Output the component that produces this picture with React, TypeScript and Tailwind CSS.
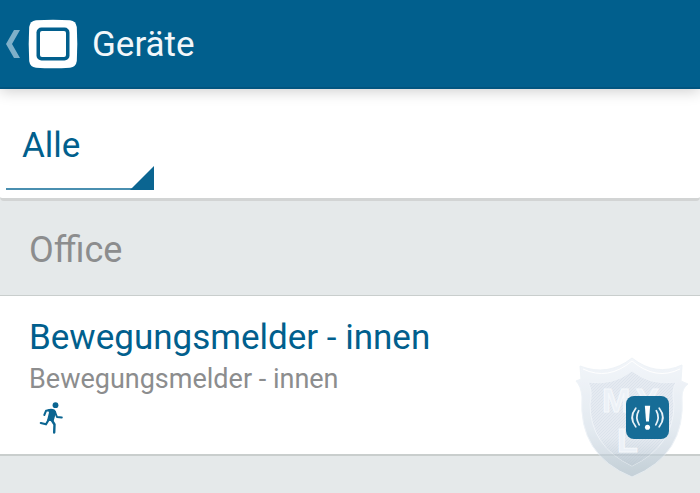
import { useId } from "react";

function AppLogo() {
  return (
    <svg viewBox="0 0 50 50" className="h-[50px] w-[50px]" aria-hidden="true">
      <path
        d="M8 1.200Q25 .2 42 1.200Q48 2 48.800 8Q49.800 25 48.800 42Q48 48 42 48.800Q25 49.800 8 48.800Q2 48 1.200 42Q.2 25 1.200 8Q2 2 8 1.2Z"
        fill="#fff"
      />
      <rect x="8.500" y="8.500" width="33" height="33" rx="5" fill="#015f8d" />
      <rect x="12" y="12" width="26" height="26" rx="2" fill="#fff" />
    </svg>
  );
}

function Runner() {
  return (
    <svg
      viewBox="0 0 26 34"
      className="h-[34px] w-[26px]"
      fill="none"
      stroke="#0b6591"
      strokeLinecap="round"
      strokeLinejoin="round"
      role="img"
      aria-label="Bewegung"
    >
      <circle cx="16.500" cy="4.200" r="2.900" fill="#0b6591" stroke="none" />
      <path d="M8.500 8.500Q12 7 15.500 8.500L17.200 11L14.500 20.500L8 19.500L10 11.500Z" fill="#0b6591" stroke="none" />
      <path d="M11.500 9L7 9.800L5.300 14" strokeWidth="2" />
      <path d="M15.800 10.500L18 16L22.800 16.500" strokeWidth="2" />
      <path d="M9.500 19L7 23.300L1.800 22" strokeWidth="2.200" />
      <path d="M13 19.500L15.500 23.500L15.200 31.500" strokeWidth="2.400" />
    </svg>
  );
}

function AlertIcon() {
  return (
    <svg viewBox="0 0 44 44" className="h-[43px] w-[43px]" fill="none" stroke="#e9f2f8" strokeWidth="1.800" strokeLinecap="round" aria-hidden="true">
      <path d="M19.300 10H24.700L23.500 26H20.500Z" fill="#fff" stroke="none" />
      <circle cx="22" cy="32" r="2.600" fill="#fff" stroke="none" />
      <path d="M13 15Q9 22 13.500 29.500M10 12.500Q2.500 22 10 31.500" />
      <path d="M31 15Q35 22 30.500 29.500M34 12.500Q41.500 22 34 31.500" />
    </svg>
  );
}

function Shield() {
  const id = useId();
  return (
    <svg viewBox="0 0 114 122" className="h-[122px] w-[114px]" opacity="0.65" aria-hidden="true">
      <defs>
        <linearGradient id={`${id}rim`} x1="0" y1="0" x2="0" y2="1">
          <stop offset="0" stopColor="#edf2f8" />
          <stop offset="0.600" stopColor="#d5dfe9" />
          <stop offset="1" stopColor="#b3c3ce" />
        </linearGradient>
        <linearGradient id={`${id}shade`} x1="0" y1="0" x2="0" y2="1">
          <stop offset="0.700" stopColor="#9fb2c0" stopOpacity="0" />
          <stop offset="1" stopColor="#9fb2c0" stopOpacity="0.700" />
        </linearGradient>
        <pattern id={`${id}mesh`} width="3" height="3" patternUnits="userSpaceOnUse">
          <rect width="3" height="3" fill="#d8e0ea" />
          <path d="M0 3L3 0" stroke="#c4d0df" strokeWidth="0.700" />
        </pattern>
      </defs>
      <path
        d="M5 9Q33 20 57 1Q81 20 107 8L106 24L113 27Q107 31 107 40Q111 98 57 120Q3 98 7 40Q6 29 1 24L6 22Z"
        fill={`url(#${id}rim)`}
        stroke="#e6edf4"
      />
      <path
        d="M13 25Q38 29 57 14Q76 29 101 25Q96 34 99 47Q99 89 57 109Q15 89 15 47Q18 34 13 25Z"
        fill={`url(#${id}mesh)`}
        stroke="#e9eff6"
      />
      <path
        d="M13 25Q38 29 57 14Q76 29 101 25Q96 34 99 47Q99 89 57 109Q15 89 15 47Q18 34 13 25Z"
        fill={`url(#${id}shade)`}
      />
      <path d="M8 12Q33 24 57 4Q81 24 105 12" fill="none" stroke="#fff" />
      <g fill="#e3eaf3" stroke="#f1f5fa" fontFamily="'Liberation Sans', sans-serif" fontWeight="700" fontSize="34">
        <text x="27" y="55">M</text>
        <text x="61" y="55">Y</text>
        <text x="42" y="95">L</text>
      </g>
    </svg>
  );
}

export default function App() {
  return (
    <div className="bg-[#e5e9ea] font-[Roboto,sans-serif]">
      <header className="relative z-10 flex h-[89px] items-center border-b-2 border-[#015580] bg-[#015f8d] shadow-[0_2px_14px_rgba(0,0,0,0.2)]">
        <button type="button" aria-label="Zurück" className="flex items-center gap-2 pl-1.5">
          <svg viewBox="0 0 14 28" className="h-7 w-3.5" aria-hidden="true">
            <path d="M8 0H14L6 14L14 28H8L0 14Z" fill="#7fb0c9" />
          </svg>
          <AppLogo />
        </button>
        <h1 className="ml-3.5 pt-0.5 text-[35px] leading-[42px] text-[#f2f7fa]">Geräte</h1>
      </header>

      <div className="h-[112px] rounded-b-sm border-b-3 border-[#d2d4d4] bg-white pt-[21px] pl-1.5">
        <div className="relative w-[148px] border-b-2 border-[#4a8fb0]">
          <select
            aria-label="Gerätefilter"
            className="block h-[78px] w-full appearance-none bg-transparent pb-1.5 pl-4 text-[35px] text-[#015f8d] outline-none"
          >
            <option>Alle</option>
          </select>
          <svg viewBox="0 0 24 24" className="pointer-events-none absolute right-0 -bottom-0.5 h-6 w-6" aria-hidden="true">
            <path d="M24 0V24H0Z" fill="#0b6591" />
          </svg>
        </div>
      </div>

      <main>
        <h2 className="flex h-[94px] items-center pt-1 pl-[29px] text-[36px] text-[#8c8d8e]">Office</h2>
        <section className="relative h-[161px] border-t border-b-2 border-[#c9cecd] bg-white pt-[21px] pl-[29px]">
          <h3 className="text-[35px] leading-[42px] text-[#015f8d]">Bewegungsmelder - innen</h3>
          <p className="text-[27px] leading-[41px] text-[#8c8d8e]">Bewegungsmelder - innen</p>
          <div className="ml-2.5 pt-px">
            <Runner />
          </div>
          <div className="pointer-events-none absolute top-[61px] right-[11px]">
            <Shield />
          </div>
          <button
            type="button"
            aria-label="Meldung"
            className="absolute right-[31px] bottom-[15px] rounded-lg bg-[#0b6591]/95"
          >
            <AlertIcon />
          </button>
        </section>
        <div className="h-[37px]" />
      </main>
    </div>
  );
}
